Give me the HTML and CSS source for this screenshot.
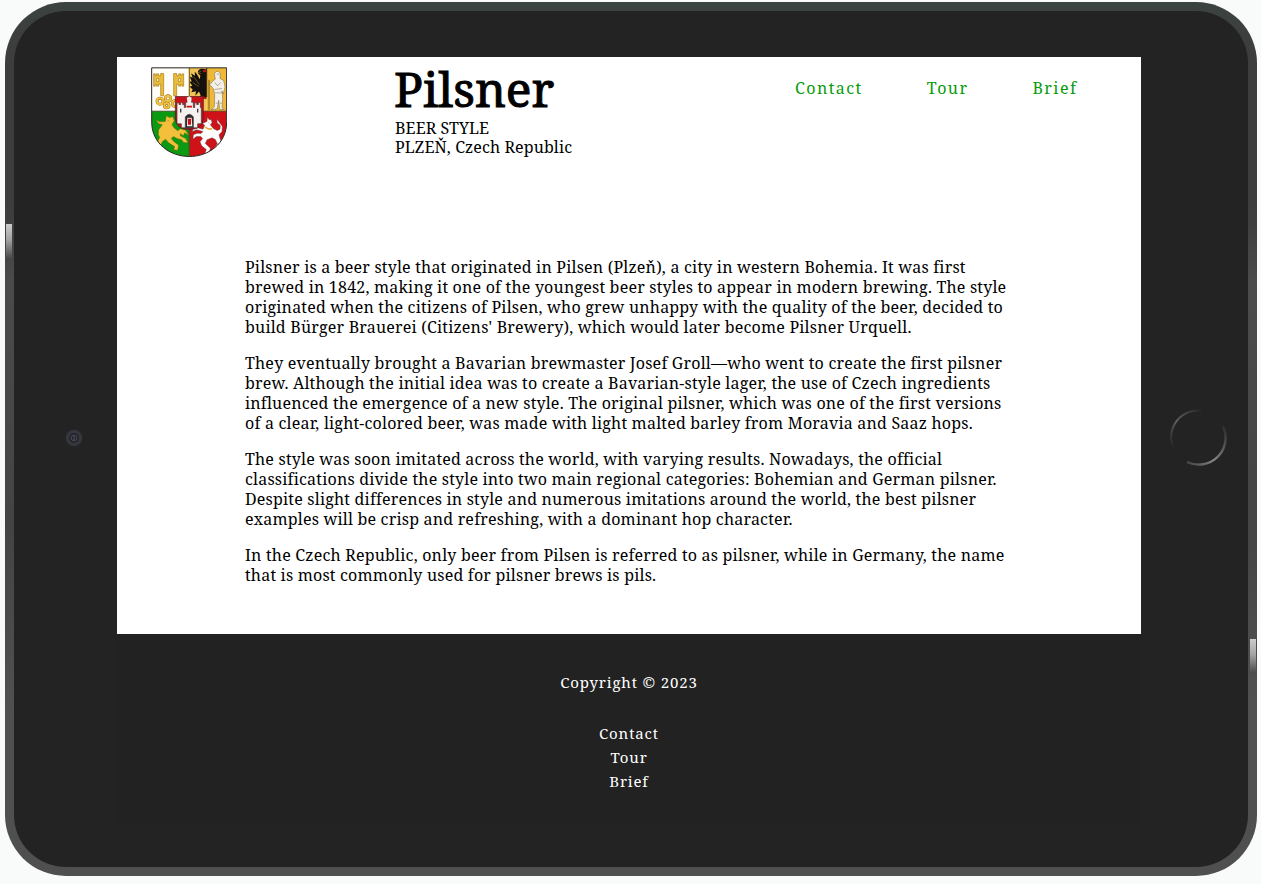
FILE: index.html
```html
<!DOCTYPE html>
<html lang="en">
<head>
<meta charset="utf-8">
<title>Pilsner</title>
<link rel="stylesheet" href="styles.css">
</head>
<body>
<div class="tablet">
  <span class="side-light side-light-left"></span>
  <span class="side-light side-light-right"></span>
  <div class="bezel">
    <svg class="camera" viewBox="0 0 18 18"><circle cx="9" cy="9" r="8.2" fill="#36363e"/><circle cx="9" cy="9" r="5" fill="#24242c"/><circle cx="9" cy="9" r="2.8" fill="#222229" stroke="#4a4a55"/><path d="M8 8h2M8 10h2" stroke="#555560"/></svg>
  </div>
  <div class="screen">
    <header class="header">
      <svg class="crest" viewBox="33 30 228 273">
        <defs><clipPath id="shield"><path d="M35 34H260V196C260 262 205 300 148 300S35 262 35 196Z"/></clipPath></defs>
        <g clip-path="url(#shield)">
          <path d="M35 34H148V164H35Z" fill="#fffef8"/>
          <path d="M146 34H200V164H146Z" fill="#f1c553"/>
          <path d="M200 34H260V164H200Z" fill="#edb936"/>
          <path d="M35 164H148V300H35Z" fill="#0b9a12"/>
          <path d="M148 164H260V300H148Z" fill="#cf1118"/>
          <g fill="#e9bd3a" stroke="#a97812" stroke-width="2"><path d="M62 51H71V118H62V83H56V89H50V84H46V89H41V52H46V57H50V52H56V58H62ZM56 66H50V75H56Z"/><path d="M110 51H101V118H110V83H116V89H122V84H126V89H131V52H126V57H122V52H116V58H110ZM116 66H122V75H116Z"/></g>
          <g fill="none" stroke="#a97812" stroke-width="9"><circle cx="60" cy="134" r="9"/><circle cx="84" cy="126" r="8"/><circle cx="80" cy="147" r="7"/><circle cx="106" cy="141" r="9"/></g>
          <g fill="none" stroke="#f0c443" stroke-width="5.5"><circle cx="60" cy="134" r="9"/><circle cx="84" cy="126" r="8"/><circle cx="80" cy="147" r="7"/><circle cx="106" cy="141" r="9"/></g>
          <path d="M199 39C184 33 171 39 174 51L181 58 179 68C174 57 170 51 164 46L165 58 153 50 158 64 149 60 155 75 148 76 157 88 149 91 158 99 154 107 168 104 166 118 177 105 182 117 174 126H199Z" fill="#15110e"/>
          <path d="M184 43L174 49 184 51M161 61L178 84M158 78L176 90" stroke="#8b6a2a" stroke-width="2" fill="none"/>
          <path d="M199 38L188 42 190 48 199 46ZM175 122l13-4 11 6v4Z" fill="#b51b16"/>
          <path d="M200 34V122" stroke="#302010" stroke-width="3"/>
          <g fill="#f3f0ea" stroke="#70644e" stroke-width="1.5"><path d="M223 52Q231 37 241 51L240 66 251 72 255 91 250 112 246 103 248 127 246 154 253 159H239L236 131 232 157 213 160 223 151 224 116 221 98 214 89 208 86 220 72 226 68Z"/><path d="M224 78L233 88 242 78M225 109H246M230 53H238M224 99L246 96M227 140H233M239 140H246" fill="none"/></g>
          <path d="M207 70V160" stroke="#796122" stroke-width="3"/>
          <g fill="#f4c03c" stroke="#6d6a0d" stroke-width="1.5"><path d="M79 178L88 183 98 181 103 192 96 204 102 214 113 223 121 217 137 221 147 237 134 229 130 238 121 231 121 238 137 246 144 259 131 258 125 250 111 246 100 240 94 246 101 255 116 266 113 281 101 280 104 270 86 259 77 248 68 254 61 268 67 279 54 273 52 257 59 243 55 234 56 220 67 205 55 201 48 190 58 196 76 195Z"/><path d="M83 192l4 1" fill="none"/></g>
          <g fill="#fff" stroke="#6b4a4a" stroke-width="1.5"><path d="M202 182L208 190 214 190 216 199 211 205 221 217 232 222 240 218 241 207 231 198 232 188 238 198 247 209 246 225 237 235 240 246 244 254 240 272 224 274 232 262 226 249 216 244 201 250 196 261 211 275 207 290 193 295 199 279 185 268 180 256 188 246 182 240 169 240 159 248 160 235 171 230 183 231 189 225 170 220 157 225 160 214 173 214 189 218 194 207 188 200 201 195Z"/><path d="M205 198l3 1" fill="none"/></g>
          <path d="M196 212q10 9 20 4" stroke="#deb33b" stroke-width="5" fill="none"/>
          <path d="M35 164H260M148 34V300" stroke="#332611" stroke-width="2"/>
        </g>
        <path d="M106 120H190V183Q190 219 148 219T106 183Z" fill="#cb1119" stroke="#42191b" stroke-width="2"/>
        <g fill="#f4f1ee" stroke="#393638" stroke-width="2"><path d="M111 153V139H117V144H122V138H128V144H133V153H137V137H142V128H154V137H160V153H164V139H170V144H175V138H181V153H184V202H173V214H124V202H111Z"/><path d="M136 202V181Q148 166 160 181V214H136Z" fill="#2b2929"/><path d="M122 157V168M173 157V168" stroke-width="4"/></g>
        <path d="M140 124l8-5 7 5-2 15h-10ZM142 184h13l2 25h-16Z" fill="#f8eee9"/><path d="M144 187h9v18h-9ZM140 148h16v5h-16Z" fill="#cb1119"/>
        <path d="M35 34H260V196C260 262 205 300 148 300S35 262 35 196Z" fill="none" stroke="#28231d" stroke-width="3"/>
      </svg>
      <div class="title">
        <h1>Pilsner</h1>
        <p>BEER STYLE</p>
        <p>PLZEŇ, Czech Republic</p>
      </div>
      <nav class="nav"><a>Contact</a><a>Tour</a><a>Brief</a></nav>
    </header>
    <main class="story">
      <p>Pilsner is a beer style that originated in Pilsen (Plzeň), a city in western Bohemia. It was first<br>brewed in 1842, making it one of the youngest beer styles to appear in modern brewing. The style<br>originated when the citizens of Pilsen, who grew unhappy with the quality of the beer, decided to<br>build Bürger Brauerei (Citizens' Brewery), which would later become Pilsner Urquell.</p>
      <p>They eventually brought a Bavarian brewmaster Josef Groll—who went to create the first pilsner<br>brew. Although the initial idea was to create a Bavarian-style lager, the use of Czech ingredients<br>influenced the emergence of a new style. The original pilsner, which was one of the first versions<br>of a clear, light-colored beer, was made with light malted barley from Moravia and Saaz hops.</p>
      <p>The style was soon imitated across the world, with varying results. Nowadays, the official<br>classifications divide the style into two main regional categories: Bohemian and German pilsner.<br>Despite slight differences in style and numerous imitations around the world, the best pilsner<br>examples will be crisp and refreshing, with a dominant hop character.</p>
      <p>In the Czech Republic, only beer from Pilsen is referred to as pilsner, while in Germany, the name<br>that is most commonly used for pilsner brews is pils.</p>
    </main>
    <footer class="footer">
      <p>Copyright © 2023</p>
      <nav class="footer-nav"><a>Contact</a><a>Tour</a><a>Brief</a></nav>
    </footer>
  </div>
  <div class="bezel">
    <svg class="home" viewBox="0 0 60 60">
      <defs>
        <linearGradient id="rim-top" x1="0" y1="1" x2="1" y2="0"><stop offset="0" stop-color="#242424"/><stop offset=".45" stop-color="#606060"/><stop offset="1" stop-color="#262626"/></linearGradient>
        <linearGradient id="rim-low" x1="0" y1="1" x2="1" y2="0"><stop offset="0" stop-color="#444"/><stop offset=".4" stop-color="#858585"/><stop offset="1" stop-color="#2a2a2a"/></linearGradient>
      </defs>
      <path d="M4 39A26.5 26.5 0 0 1 33 3" fill="none" stroke="url(#rim-top)" stroke-width="2"/>
      <path d="M54 18A27 27 0 0 1 18 54" fill="none" stroke="url(#rim-low)" stroke-width="2.4"/>
    </svg>
  </div>
</div>
</body>
</html>
```

FILE: styles.css
```css
* { box-sizing: border-box; }
body {
  margin: 0;
  padding: 2px 4px 8px 5px;
  height: 884px;
  overflow: hidden;
  background: #f9fafa;
  color: #000;
  font-family: "Noto Serif", "Droid Serif", "DejaVu Serif Condensed", "DejaVu Serif", serif;
  font-size: 16px;
}
.tablet {
  position: relative;
  display: grid;
  grid-template-columns: 103px 1024px 107px;
  width: 1252px;
  height: 874px;
  padding-top: 46px;
  border: 9px solid transparent;
  border-radius: 61px;
  background:
    linear-gradient(#232323, #232323) padding-box,
    linear-gradient(#3a433f, #3d3d3d 5%, #3d3d3d 24%, #4b4b4b 32%, #444 60%, #505050 80%, #4f4f4f) border-box;
}
.side-light { position: absolute; width: 6px; height: 34px; background: linear-gradient(#ccc, #a4a4a4 45%, #4a4a4a); }
.side-light-left { left: -8px; top: 213px; }
.side-light-right { right: -8px; top: 628px; }
.bezel { height: 768px; }
.camera { display: block; width: 18px; height: 18px; margin: 372px 0 0 51px; }
.home { display: block; width: 60px; height: 60px; margin: 351px 0 0 28px; }
.screen { height: 768px; background: #fff; }
p, h1 { margin: 0; }
.header { display: flex; height: 192px; padding: 9px 0 0 34px; }
.crest { width: 76px; height: 92px; margin-right: 168px; }
.title { width: 400px; white-space: nowrap; }
h1 { height: 53px; margin-left: -1px; font-size: 48px; line-height: 46px; font-weight: 400; letter-spacing: 0; -webkit-text-stroke: 1px #000; }
.title p { line-height: 19px; letter-spacing: .1px; }
.nav { display: flex; gap: 64px; padding-top: 11px; color: #079b0b; letter-spacing: 1.45px; line-height: 22px; }
.story { height: 385px; padding: 8px 128px 0; line-height: 20px; letter-spacing: .2px; white-space: nowrap; }
.story p { margin-bottom: 16px; }
.footer { height: 191px; padding-top: 36px; background: #222; color: #fff; text-align: center; font-size: 15px; letter-spacing: .85px; line-height: 24px; }
.footer-nav { display: flex; flex-direction: column; padding-top: 27px; }
```
